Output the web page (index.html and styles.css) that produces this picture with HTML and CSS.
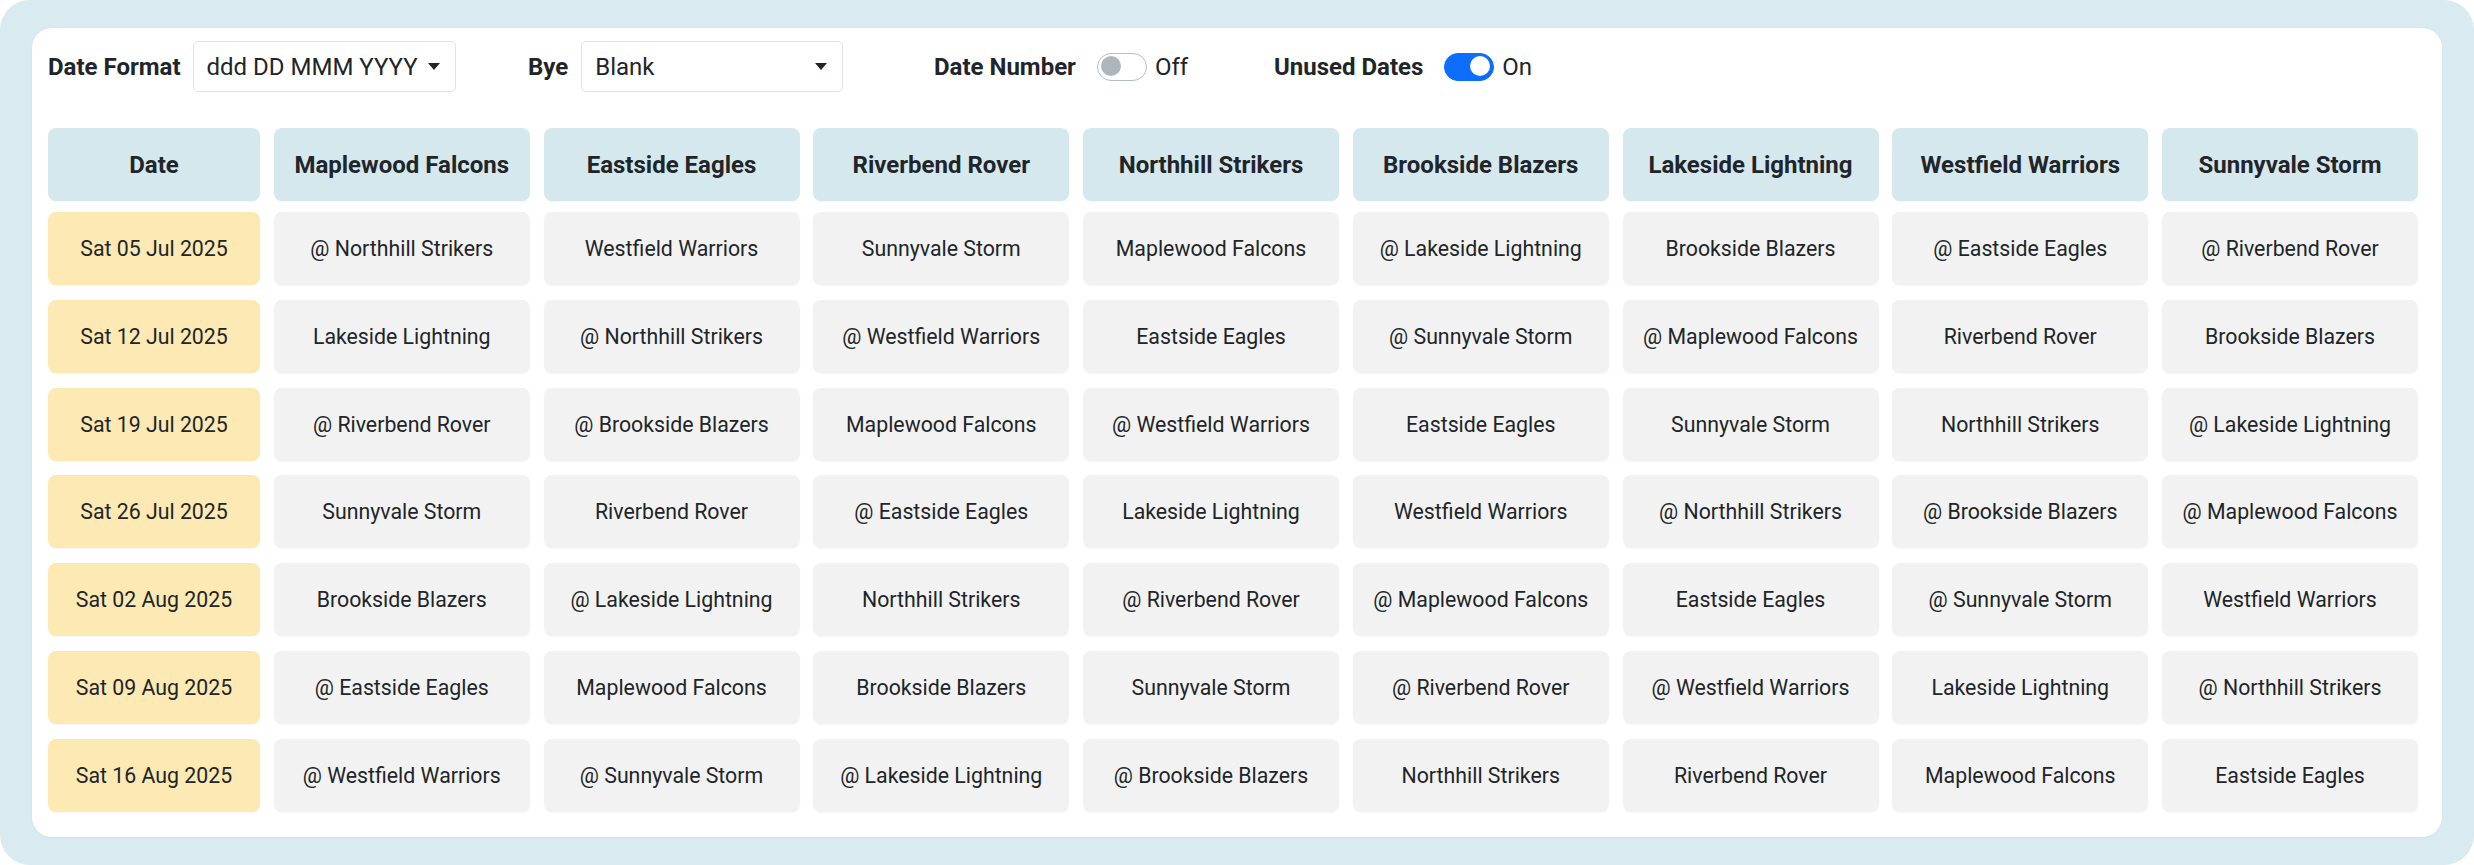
FILE: index.html
```html
<!DOCTYPE html>
<html lang="en">
<head>
    <meta charset="UTF-8">
    <meta name="viewport" content="width=device-width, initial-scale=1.0">
    <title>Fixture Grid</title>
    <link rel="stylesheet" href="styles.css">
</head>
<body>
    <div class="frame">
        <div class="card">
            <!-- Options bar -->
            <div class="options">
                <div class="opt opt-format">
                    <span class="opt-label">Date Format</span>
                    <div class="select select-format">
                        <span>ddd DD MMM YYYY</span>
                        <span class="caret"></span>
                    </div>
                </div>
                <div class="opt opt-bye">
                    <span class="opt-label">Bye</span>
                    <div class="select select-bye">
                        <span>Blank</span>
                        <span class="caret"></span>
                    </div>
                </div>
                <div class="opt opt-number">
                    <span class="opt-label">Date Number</span>
                    <span class="switch"><span class="knob"></span></span>
                    <span class="switch-text">Off</span>
                </div>
                <div class="opt opt-unused">
                    <span class="opt-label">Unused Dates</span>
                    <span class="switch on"><span class="knob"></span></span>
                    <span class="switch-text">On</span>
                </div>
            </div>

            <!-- Schedule -->
            <div class="grid grid-head">
                <div class="cell head">Date</div>
                <div class="cell head">Maplewood Falcons</div>
                <div class="cell head">Eastside Eagles</div>
                <div class="cell head">Riverbend Rover</div>
                <div class="cell head">Northhill Strikers</div>
                <div class="cell head">Brookside Blazers</div>
                <div class="cell head">Lakeside Lightning</div>
                <div class="cell head">Westfield Warriors</div>
                <div class="cell head">Sunnyvale Storm</div>
            </div>
            <div class="grid grid-body">
                <div class="cell date">Sat 05 Jul 2025</div>
                <div class="cell">@ Northhill Strikers</div>
                <div class="cell">Westfield Warriors</div>
                <div class="cell">Sunnyvale Storm</div>
                <div class="cell">Maplewood Falcons</div>
                <div class="cell">@ Lakeside Lightning</div>
                <div class="cell">Brookside Blazers</div>
                <div class="cell">@ Eastside Eagles</div>
                <div class="cell">@ Riverbend Rover</div>

                <div class="cell date">Sat 12 Jul 2025</div>
                <div class="cell">Lakeside Lightning</div>
                <div class="cell">@ Northhill Strikers</div>
                <div class="cell">@ Westfield Warriors</div>
                <div class="cell">Eastside Eagles</div>
                <div class="cell">@ Sunnyvale Storm</div>
                <div class="cell">@ Maplewood Falcons</div>
                <div class="cell">Riverbend Rover</div>
                <div class="cell">Brookside Blazers</div>

                <div class="cell date">Sat 19 Jul 2025</div>
                <div class="cell">@ Riverbend Rover</div>
                <div class="cell">@ Brookside Blazers</div>
                <div class="cell">Maplewood Falcons</div>
                <div class="cell">@ Westfield Warriors</div>
                <div class="cell">Eastside Eagles</div>
                <div class="cell">Sunnyvale Storm</div>
                <div class="cell">Northhill Strikers</div>
                <div class="cell">@ Lakeside Lightning</div>

                <div class="cell date">Sat 26 Jul 2025</div>
                <div class="cell">Sunnyvale Storm</div>
                <div class="cell">Riverbend Rover</div>
                <div class="cell">@ Eastside Eagles</div>
                <div class="cell">Lakeside Lightning</div>
                <div class="cell">Westfield Warriors</div>
                <div class="cell">@ Northhill Strikers</div>
                <div class="cell">@ Brookside Blazers</div>
                <div class="cell">@ Maplewood Falcons</div>

                <div class="cell date">Sat 02 Aug 2025</div>
                <div class="cell">Brookside Blazers</div>
                <div class="cell">@ Lakeside Lightning</div>
                <div class="cell">Northhill Strikers</div>
                <div class="cell">@ Riverbend Rover</div>
                <div class="cell">@ Maplewood Falcons</div>
                <div class="cell">Eastside Eagles</div>
                <div class="cell">@ Sunnyvale Storm</div>
                <div class="cell">Westfield Warriors</div>

                <div class="cell date">Sat 09 Aug 2025</div>
                <div class="cell">@ Eastside Eagles</div>
                <div class="cell">Maplewood Falcons</div>
                <div class="cell">Brookside Blazers</div>
                <div class="cell">Sunnyvale Storm</div>
                <div class="cell">@ Riverbend Rover</div>
                <div class="cell">@ Westfield Warriors</div>
                <div class="cell">Lakeside Lightning</div>
                <div class="cell">@ Northhill Strikers</div>

                <div class="cell date">Sat 16 Aug 2025</div>
                <div class="cell">@ Westfield Warriors</div>
                <div class="cell">@ Sunnyvale Storm</div>
                <div class="cell">@ Lakeside Lightning</div>
                <div class="cell">@ Brookside Blazers</div>
                <div class="cell">Northhill Strikers</div>
                <div class="cell">Riverbend Rover</div>
                <div class="cell">Maplewood Falcons</div>
                <div class="cell">Eastside Eagles</div>
            </div>
        </div>
    </div>
</body>
</html>
```

FILE: styles.css
```css
/* Global */
body {
    margin: 0;
    background-color: #ffffff;
    font-family: Roboto, "Liberation Sans", Arial, sans-serif;
    color: #212529;
}

/* Outer tinted frame */
.frame {
    height: 865px;
    box-sizing: border-box;
    padding: 28px 32px 28px 32px;
    background-color: #d9eaf0;
    border-radius: 30px;
}

/* White card */
.card {
    height: 100%;
    box-sizing: border-box;
    padding: 13px 24px 25px 16px;
    background-color: #ffffff;
    border-radius: 20px;
    box-shadow: 0 1px 3px rgba(0, 0, 0, 0.04);
}

/* Options bar */
.options {
    display: flex;
    align-items: center;
    height: 51px;
    margin-bottom: 36px;
}

.opt {
    display: flex;
    align-items: center;
    flex: none;
}

.opt-format { width: 480px; gap: 12px; }
.opt-bye    { width: 406px; gap: 13px; }
.opt-number { width: 340px; }
.opt-unused { }

.opt-label {
    font-size: 24px;
    font-weight: 700;
}

/* Select boxes */
.select {
    display: flex;
    align-items: center;
    justify-content: space-between;
    box-sizing: border-box;
    height: 51px;
    padding: 0 15px 0 13px;
    border: 1px solid #dee2e6;
    border-radius: 5px;
    background-color: #ffffff;
    font-size: 24px;
}

.select-format { width: 263px; }
.select-bye    { width: 262px; }

.caret {
    width: 0;
    height: 0;
    border-left: 6.5px solid transparent;
    border-right: 6.5px solid transparent;
    border-top: 7px solid #212529;
}

/* Toggle switches */
.switch {
    position: relative;
    box-sizing: border-box;
    width: 50px;
    height: 28px;
    margin-left: 21px;
    border: 1.5px solid #b7bdc4;
    border-radius: 14px;
    background-color: #ffffff;
}

.switch .knob {
    position: absolute;
    top: 2.5px;
    left: 3px;
    width: 20px;
    height: 20px;
    border-radius: 50%;
    background-color: #adb5bd;
}

.switch.on {
    border-color: #0d6efd;
    background-color: #0d6efd;
}

.switch.on .knob {
    left: auto;
    right: 3px;
    background-color: #ffffff;
}

.switch-text {
    margin-left: 8px;
    font-size: 24px;
}

/* Schedule grid */
.grid {
    display: grid;
    grid-template-columns: 212px repeat(8, 1fr);
    column-gap: 13.75px;
}

.grid-head {
    margin-bottom: 11px;
}

.grid-body {
    row-gap: 14.8px;
}

.cell {
    display: flex;
    align-items: center;
    justify-content: center;
    height: 73px;
    border-radius: 8px;
    background-color: #f2f2f2;
    font-size: 21.3px;
    white-space: nowrap;
    box-shadow: 0 1px 2px rgba(0, 0, 0, 0.04);
}

.cell.head {
    background-color: #d4e8ee;
    font-size: 24px;
    font-weight: 700;
}

.cell.date {
    background-color: #fde9b3;
}
```
